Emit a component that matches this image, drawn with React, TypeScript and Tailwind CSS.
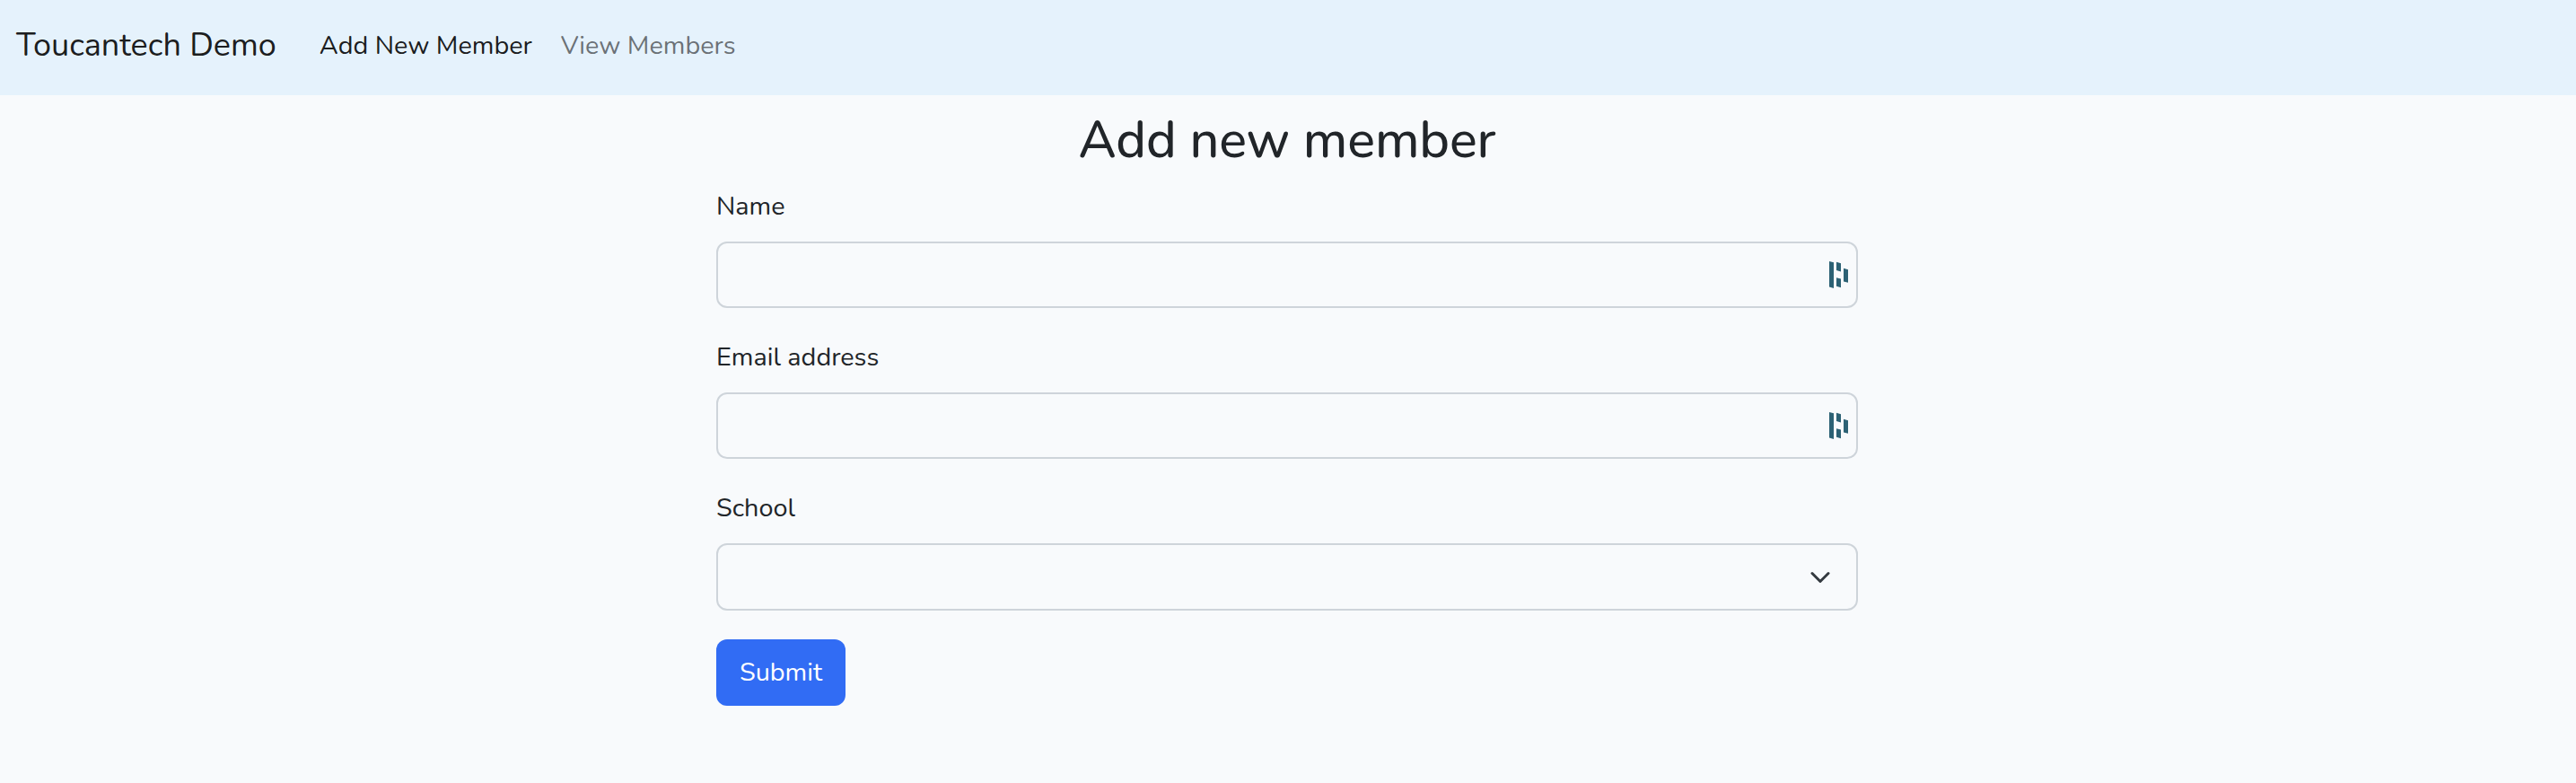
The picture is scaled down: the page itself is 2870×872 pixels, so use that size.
function ExtensionIcon() {
  return (
    <svg className="h-[30px] w-[21px]" viewBox="0 0 21 30" fill="#2c6174" aria-hidden="true">
      <path d="M0 0 5 1.2V30L0 28.6Z" />
      <path d="M8 .8 13 2.2V11.4L8 10Z" />
      <path d="M8 18.2 13 19.6V29.2L8 27.8Z" />
      <path d="M16 7.8 21 9.2V23.8L16 22.4Z" />
    </svg>
  );
}

function TextField({ label }: { label: string }) {
  return (
    <div className="mb-8 flex flex-col gap-4">
      <label className="leading-[46.08px]">{label}</label>
      <div className="flex h-[74.08px] items-center justify-end rounded-xl border-2 border-[#ced4da] bg-[#f8fafc] pr-[9px]">
        <ExtensionIcon />
      </div>
    </div>
  );
}

function SelectField({ label }: { label: string }) {
  return (
    <div className="mb-8 flex flex-col gap-4">
      <label className="leading-[46.08px]">{label}</label>
      <div className="flex h-[74.5px] items-center justify-end rounded-xl border-2 border-[#ced4da] bg-[#f8fafc] pt-px pr-[28px]">
        <svg className="h-6 w-6" viewBox="0 0 16 16" fill="none" aria-hidden="true">
          <path d="m2 5 6 6 6-6" stroke="#343a40" strokeWidth="2" strokeLinecap="round" strokeLinejoin="round" />
        </svg>
      </div>
    </div>
  );
}

export default function App() {
  return (
    <div className="flex min-h-screen flex-col bg-[#f8fafc] font-['Nunito','Lato',sans-serif] text-[28.8px] font-[450] text-[#212529]">
      <nav className="flex h-[105.6px] items-center bg-[#e5f2fc] pb-[4px] pl-[18px] text-black/90">
        <a className="mr-12 text-[36px] leading-[57.6px]">Toucantech Demo</a>
        <a className="mr-8 leading-[46.08px]">Add New Member</a>
        <a className="leading-[46.08px] text-black/55">View Members</a>
      </nav>
      <main className="mx-auto w-[1274px] pt-[16.3px] pr-0.5">
        <h1 className="mb-4 text-center text-[57.6px] leading-[69.12px] font-medium tracking-[-0.15px]">Add new member</h1>
        <form>
          <TextField label="Name" />
          <TextField label="Email address" />
          <SelectField label="School" />
          <button type="button" className="flex h-[74.08px] w-36 items-center justify-center rounded-xl bg-[#316cf4] text-white">
            Submit
          </button>
        </form>
      </main>
    </div>
  );
}
